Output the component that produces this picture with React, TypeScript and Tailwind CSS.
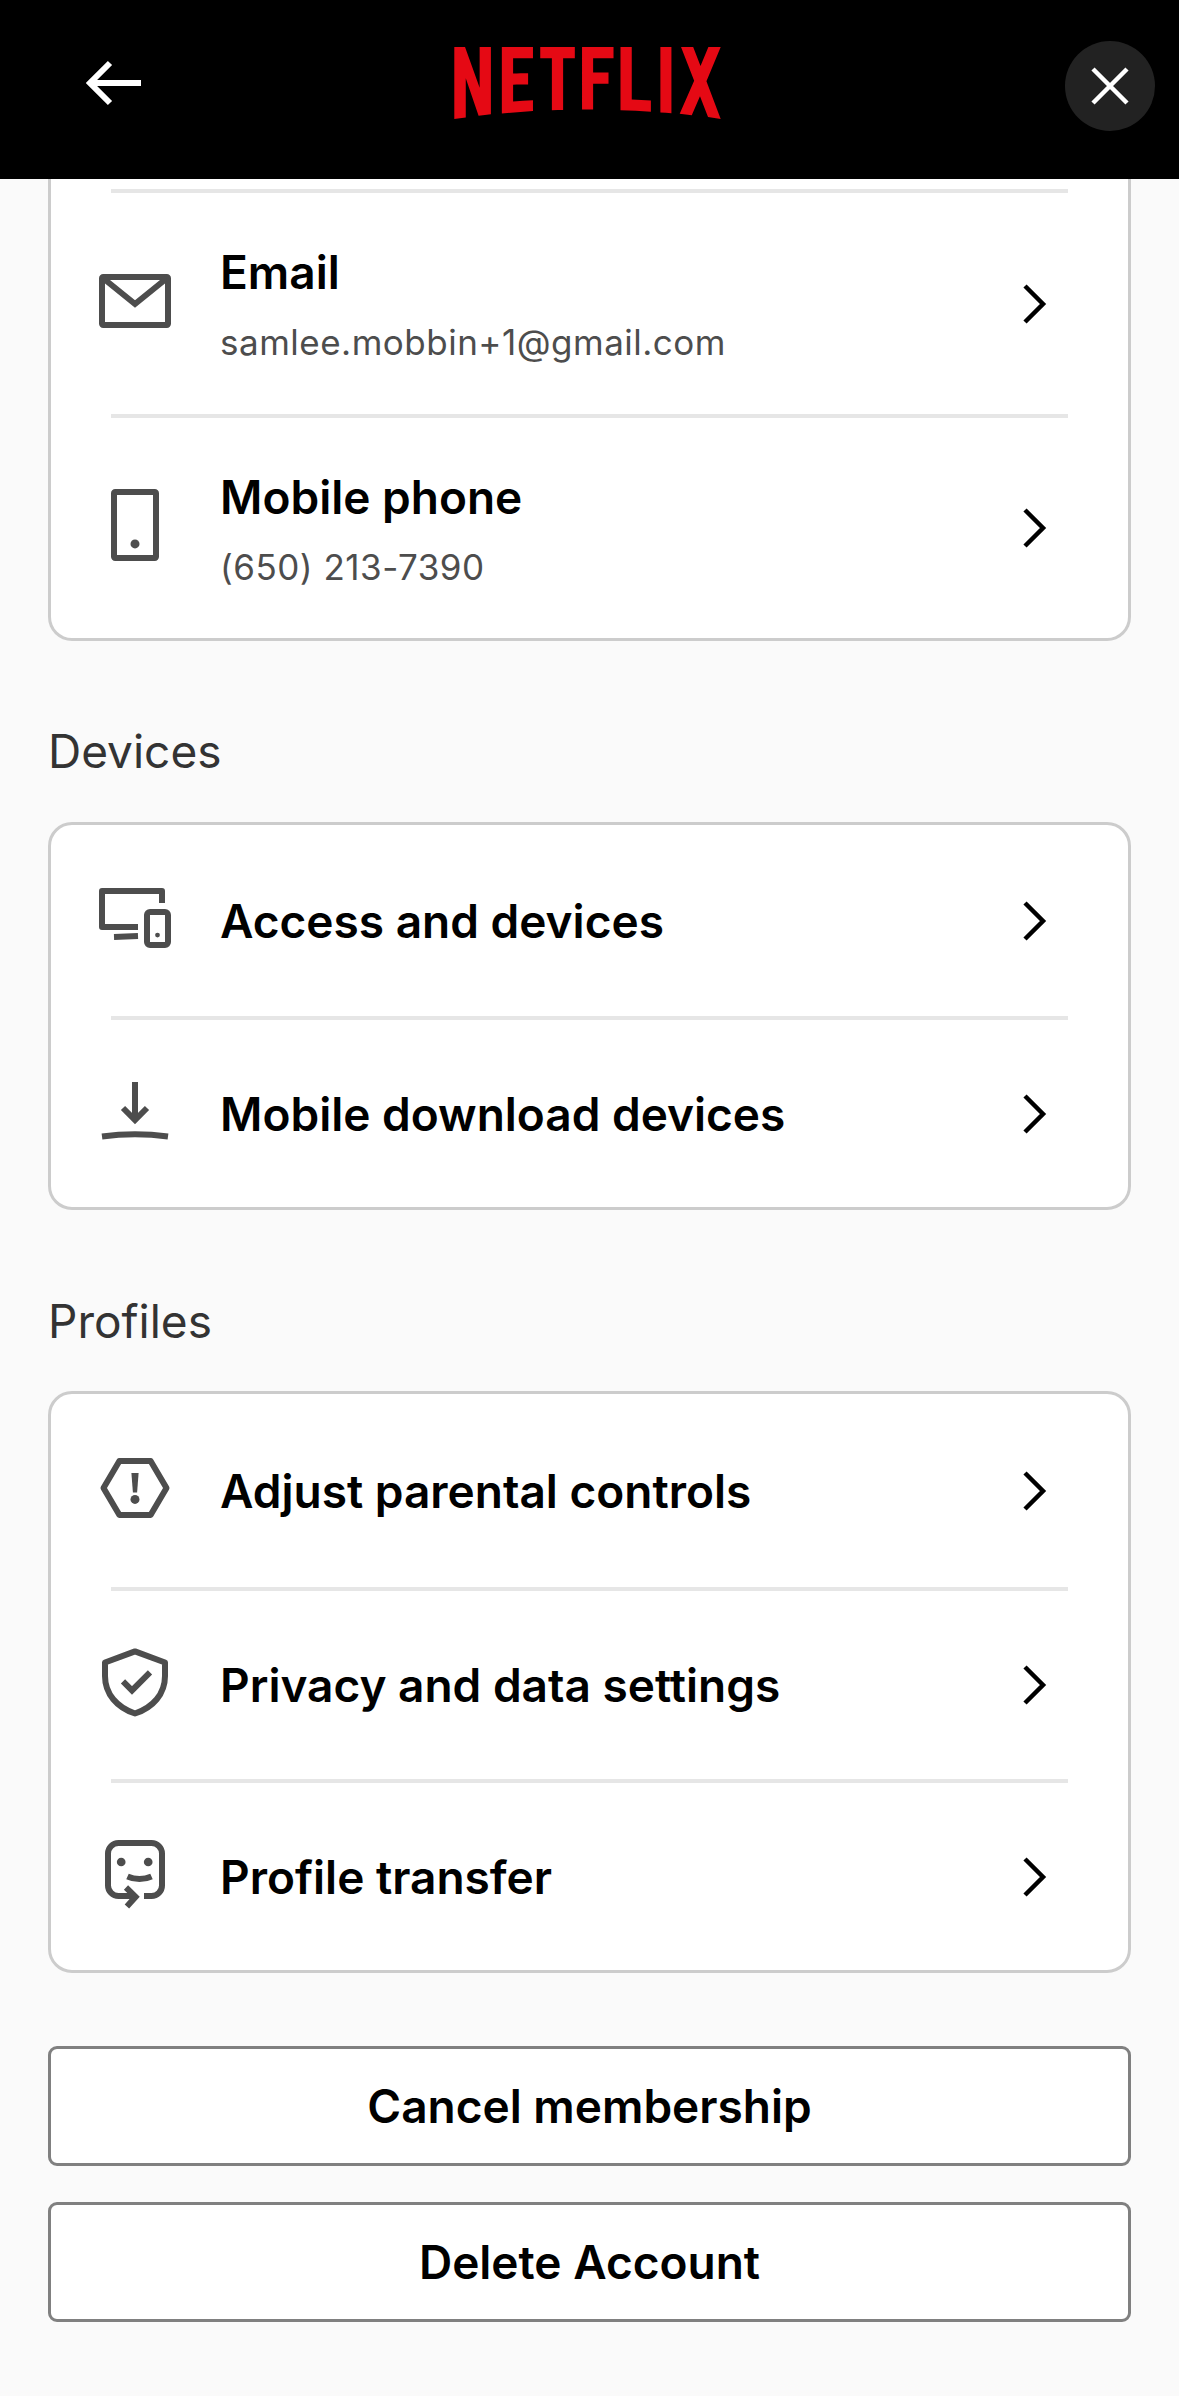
const F = "font-['Inter','Liberation_Sans',sans-serif]";

function Icon({ children }: { children: React.ReactNode }) {
  return (
    <svg viewBox="0 0 24 24" width="72" height="72" fill="none" stroke="#4d4d4d" strokeWidth="2" className="shrink-0 mb-[6px]">
      {children}
    </svg>
  );
}

const Mail = () => (
  <Icon>
    <rect x="1" y="4" width="22" height="16" rx="0.4" strokeLinejoin="round" />
    <path d="M1.500 4.500 12 13 22.500 4.500" />
  </Icon>
);
const Phone = () => (
  <Icon>
    <rect x="5" y="1" width="14" height="22" rx="0.4" strokeLinejoin="round" />
    <circle cx="12" cy="18.300" r="1.500" fill="#4d4d4d" stroke="none" />
  </Icon>
);
const Devices = () => (
  <Icon>
    <path d="M21 7V3H1V15H13" strokeLinejoin="round" />
    <path d="M5 18.300 13 18" />
    <rect x="16" y="10" width="7" height="11" rx="1" strokeLinejoin="round" />
    <circle cx="19.500" cy="17.700" r="0.800" fill="#4d4d4d" stroke="none" />
  </Icon>
);
const Download = () => (
  <Icon>
    <path d="M12 2.300V15M8 11 12 15 16 11" />
    <path d="M1 20.500Q12 19 23 20.500" />
  </Icon>
);
const Hex = () => (
  <Icon>
    <path d="M6.800 3H17.200L22.500 12 17.200 21H6.800L1.500 12Z" strokeLinejoin="round" />
    <path d="M10.800 7H13.200L12.700 13.500H11.300Z" fill="#4d4d4d" stroke="none" />
    <circle cx="12" cy="15.800" r="1.500" fill="#4d4d4d" stroke="none" />
  </Icon>
);
const Shield = () => (
  <Icon>
    <path d="M12 1.800 22 5.500V10C22 16 18 20.500 12 22.500 6 20.500 2 16 2 10V5.500Z" strokeLinejoin="round" />
    <path d="M8 11.800 11 14.800 17 8.800" />
  </Icon>
);
const Transfer = () => (
  <Icon>
    <path d="M12 19.300H6.500A3.500 3.500 0 0 1 3 15.800V5.200A3.500 3.500 0 0 1 6.500 1.700H17.500A3.500 3.500 0 0 1 21 5.200V15.800A3.500 3.500 0 0 1 17.500 19.300H15" />
    <circle cx="7.400" cy="8" r="1.450" fill="#4d4d4d" stroke="none" />
    <circle cx="16.400" cy="8" r="1.450" fill="#4d4d4d" stroke="none" />
    <path d="M9.500 12.800Q13.500 14.600 17.500 12.800" />
    <path d="M9 16.500 12.200 19.600 9.300 22.800" />
  </Icon>
);
const Chevron = () => (
  <svg viewBox="0 0 28 40" width="28" height="40" fill="none" stroke="#000" strokeWidth="4.500" className="shrink-0">
    <path d="M3 2 21 20 3 38" />
  </svg>
);

function Row({ icon, title, sub, h, last }: { icon: React.ReactNode; title: string; sub?: string; h: string; last?: boolean }) {
  return (
    <>
      <div className={`flex items-center pl-[48px] pr-[78px] ${h}`}>
        {icon}
        <div className="ml-[49px] flex-1 min-w-0">
          <div className="text-[46px] leading-[60px] font-semibold text-black">{title}</div>
          {sub && <div className="mt-[17px] text-[35px] tracking-[0.5px] leading-[46px] text-[#4d4d4d]">{sub}</div>}
        </div>
        <Chevron />
      </div>
      {!last && <div className="mx-[60px] h-[4px] bg-[#e6e6e6]" />}
    </>
  );
}

function Label({ children }: { children: React.ReactNode }) {
  return <div className="mx-[48px] text-[46px] leading-[60px] text-[#333333]">{children}</div>;
}

function Btn({ children }: { children: React.ReactNode }) {
  return (
    <div className="mx-[48px] h-[120px] flex items-center justify-center bg-white border-[3px] border-[#808080] rounded-[9px] text-[46px] font-semibold text-black">
      {children}
    </div>
  );
}

export default function App() {
  return (
    <div className={`w-[1179px] h-[2396px] bg-[#fafafa] overflow-hidden ${F}`}>
      <header className="h-[179px] bg-black flex items-start pl-[20px] pr-[24px]">
        <div className="flex-1">
          <svg viewBox="0 0 60 50" width="60" height="50" fill="none" stroke="#fff" strokeWidth="6" className="mt-[58px] ml-[64px]">
            <path d="M57 25H6M26 5 6 25 26 45" />
          </svg>
        </div>
        <svg viewBox="0 0 111 30" width="267" height="72" fill="#e50914" className="mt-[47px]">
          <path d="M105.06 14.28 111 30C109.25 29.75 107.5 29.44 105.72 29.16L102.37 20.47 98.94 28.44C97.25 28.16 95.59 28.06 93.91 27.84L99.94 14.09 94.47 0H99.53L102.59 7.87 105.87 0H111ZM90.47 0H85.87V27.25C87.37 27.34 88.94 27.41 90.47 27.59ZM81.91 26.94C77.72 26.66 73.53 26.41 69.25 26.31V0H73.94V21.87C76.62 21.94 79.31 22.16 81.91 22.28ZM64.25 10.66V15.34H57.84V26H53.22V0H66.34V4.69H57.84V10.66ZM45.34 4.69V26.25C43.78 26.25 42.19 26.25 40.66 26.31V4.69H35.81V0H50.22V4.69ZM30.75 15.59C28.69 15.59 26.25 15.59 24.5 15.69V22.66C27.25 22.47 30 22.25 32.78 22.16V26.66L19.81 27.69V0H32.78V4.69H24.5V11C26.31 11 29.09 10.91 30.75 10.91ZM4.78 12.97V29.34C3.09 29.53 1.59 29.75 0 30V0H4.47L10.56 17.03V0H15.25V28.06C13.59 28.34 11.91 28.44 10.12 28.69Z" />
        </svg>
        <div className="flex-1 flex justify-end">
          <div className="mt-[41px] w-[90px] h-[90px] rounded-full bg-[#222222] flex items-center justify-center">
            <svg viewBox="0 0 40 40" width="40" height="40" fill="none" stroke="#fff" strokeWidth="4.500">
              <path d="M3 3 37 37M37 3 3 37" />
            </svg>
          </div>
        </div>
      </header>

      <section className="mx-[48px] bg-white border-x-[3px] border-b-[3px] border-[#cccccc] rounded-b-[24px]">
        <div className="pt-[10px]" />
        <div className="mx-[60px] h-[4px] bg-[#e6e6e6]" />
        <Row icon={<Mail />} title="Email" sub="samlee.mobbin+1@gmail.com" h="h-[221px]" />
        <Row icon={<Phone />} title="Mobile phone" sub="(650) 213-7390" h="h-[220px]" last />
      </section>

      <div className="mt-[80px]"><Label>Devices</Label></div>
      <section className="mt-[41px] mx-[48px] bg-white border-[3px] border-[#cccccc] rounded-[24px]">
        <Row icon={<Devices />} title="Access and devices" h="h-[191px]" />
        <Row icon={<Download />} title="Mobile download devices" h="h-[187px]" last />
      </section>

      <div className="mt-[81px]"><Label>Profiles</Label></div>
      <section className="mt-[40px] mx-[48px] bg-white border-[3px] border-[#cccccc] rounded-[24px]">
        <Row icon={<Hex />} title="Adjust parental controls" h="h-[193px]" />
        <Row icon={<Shield />} title="Privacy and data settings" h="h-[188px]" />
        <Row icon={<Transfer />} title="Profile transfer" h="h-[187px]" last />
      </section>

      <div className="mt-[73px] flex flex-col gap-[36px]">
        <Btn>Cancel membership</Btn>
        <Btn>Delete Account</Btn>
      </div>
    </div>
  );
}
